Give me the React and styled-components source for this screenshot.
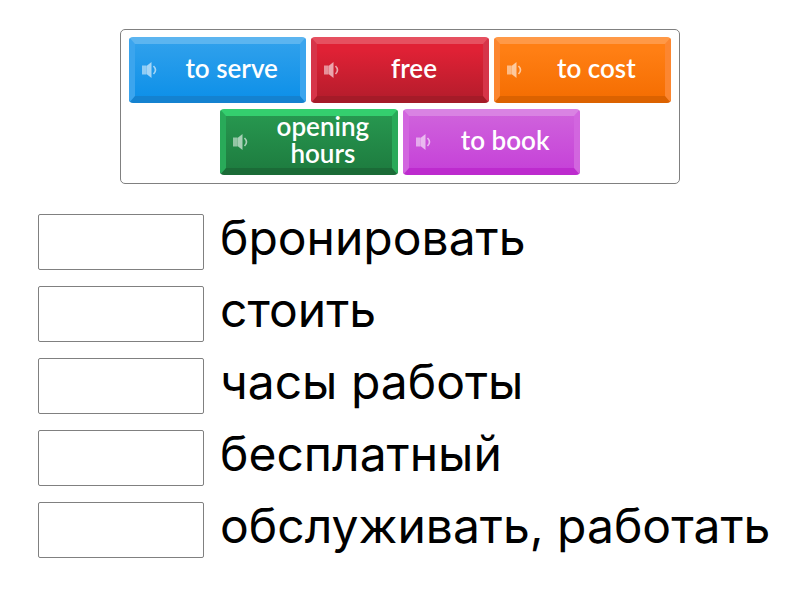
import styled, { createGlobalStyle } from "styled-components";

const GlobalStyle = createGlobalStyle`
  * {
    box-sizing: border-box;
  }

  body {
    margin: 0;
    background: #ffffff;
    color: #000000;
    font-family: Inter, "Noto Sans", sans-serif;
  }
`;

const Page = styled.main`
  padding: 29px 0 24px;
`;

const Bank = styled.section`
  display: flex;
  flex-wrap: wrap;
  justify-content: center;
  gap: 6px 5px;
  width: 70%;
  margin: 0 auto;
  padding: 7px 8px 8px;
  border: 1px solid #808080;
  border-radius: 5px;
`;

const Tile = styled.button`
  flex: 0 0 calc((100% - 10px) / 3);
  display: flex;
  align-items: center;
  height: 66px;
  padding: 0 0 0 6px;
  border-style: solid;
  border-width: 7px 6px;
  border-color: ${(props) => props.$edge};
  border-radius: 4px;
  background: ${(props) => props.$fill} border-box;
  color: #ffffff;
  cursor: grab;
`;

const TileText = styled.span`
  flex: 1;
  padding: 0 8px 4px 12px;
  font-family: Lato, "Open Sans", sans-serif;
  font-size: 26px;
  font-weight: 600;
  line-height: 27px;
  text-align: center;
`;

const Icon = styled.svg`
  flex: none;
  width: 18px;
  height: 18px;
  opacity: 0.6;
`;

const List = styled.div`
  display: grid;
  gap: 16px;
  margin-top: 30px;
  padding: 0 16px 0 38px;
`;

const Row = styled.div`
  display: grid;
  grid-template-columns: 166px 1fr;
  gap: 16px;
  height: 56px;
`;

const Slot = styled.input`
  width: 100%;
  height: 56px;
  padding: 0 12px;
  border: 1px solid #808080;
  border-radius: 2px;
  background: #ffffff;
  font-family: Lato, "Open Sans", sans-serif;
  font-size: 26px;
  text-align: center;
`;

const Definition = styled.label`
  font-size: 48px;
  line-height: 48px;
  white-space: nowrap;
`;

const tiles = [
  {
    text: "to serve",
    fill: "linear-gradient(#33a2ec, #0b8fe8)",
    edge: "#5cb5f0 #3ba5ee #1482d0",
  },
  {
    text: "free",
    fill: "linear-gradient(#e02135 20%, #b21c2b)",
    edge: "#e65060 #d63549 #a51b28",
  },
  {
    text: "to cost",
    fill: "linear-gradient(#ff7f14 20%, #f46c00)",
    edge: "#ff9947 #fc8630 #dc6200",
  },
  {
    text: "opening hours",
    fill: "linear-gradient(#289a51, #1d7a3e)",
    edge: "#34cf6e #29aa59 #1b6b37",
  },
  {
    text: "to book",
    fill: "linear-gradient(#d065dc, #c53fd8)",
    edge: "#d983e3 #d266df #bd2bce",
  },
];

const definitions = [
  "бронировать",
  "стоить",
  "часы работы",
  "бесплатный",
  "обслуживать, работать",
];

const Speaker = () => (
  <Icon viewBox="0 0 18 18" aria-hidden="true">
    <path d="M1 4.5h4.5v9H1z" fill="#ffffff" opacity="0.85" />
    <path d="M5.5 5l5-4v16l-5-4z" fill="#ffffff" />
    <path
      d="M12.5 5q4 4 0 8"
      fill="none"
      stroke="#ffffff"
      strokeWidth="1.6"
    />
  </Icon>
);

const App = () => {
  return (
    <>
      <GlobalStyle />
      <Page>
        <Bank>
          {tiles.map((tile) => (
            <Tile key={tile.text} $fill={tile.fill} $edge={tile.edge}>
              <Speaker />
              <TileText>{tile.text}</TileText>
            </Tile>
          ))}
        </Bank>
        <List>
          {definitions.map((text, i) => (
            <Row key={text}>
              <Slot id={`slot-${i}`} />
              <Definition htmlFor={`slot-${i}`}>{text}</Definition>
            </Row>
          ))}
        </List>
      </Page>
    </>
  );
};

export default App;
